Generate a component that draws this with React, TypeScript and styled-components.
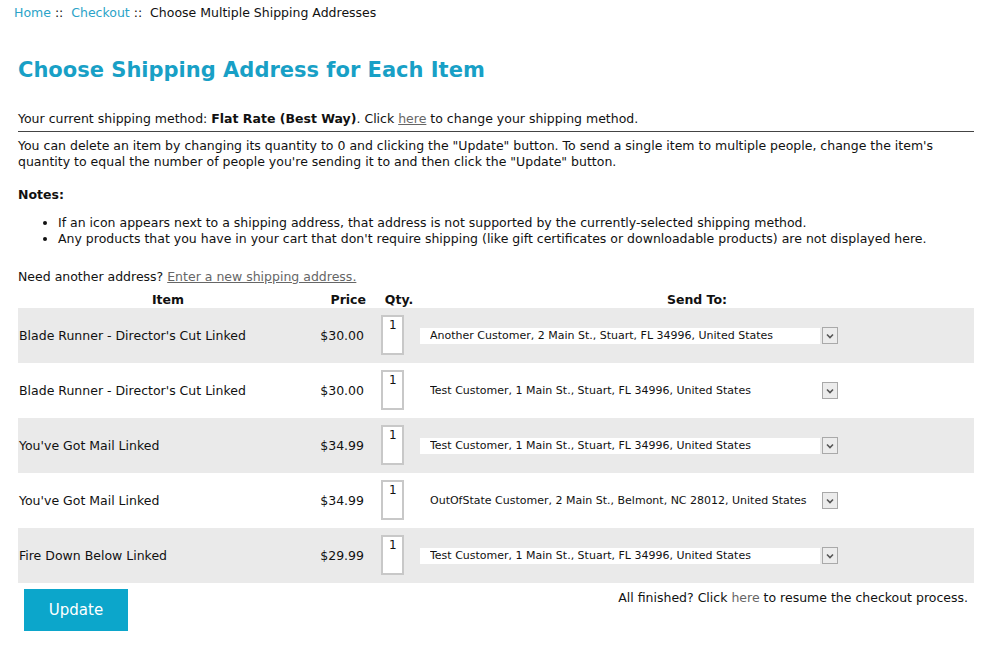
import React from "react";
import styled, { createGlobalStyle } from "styled-components";

const GlobalStyle = createGlobalStyle`
  html, body { margin: 0; padding: 0; background: #fff; }
  body {
    font-family: Verdana, "DejaVu Sans", sans-serif;
    font-size: 12.5px;
    line-height: 16px;
    color: #111;
  }
`;

const Page = styled.div`
  width: 984px;
  padding: 5px 10px 0 18px;
  box-sizing: border-box;
`;

const Breadcrumb = styled.div`
  margin-left: -4px;
  color: #111;
  white-space: pre;
`;

const CrumbLink = styled.a`
  color: #2aa3c8;
  text-decoration: none;
`;

const Title = styled.h1`
  margin: 35px 0 0;
  font-size: 21px;
  line-height: 28px;
  font-weight: bold;
  color: #18a0c6;
`;

const MethodLine = styled.p`
  margin: 27px 0 0;
  padding-bottom: 4px;
  border-bottom: 1px solid #444;
`;

const GrayLink = styled.a<{ $underline?: boolean }>`
  color: #666;
  text-decoration: ${(p) => (p.$underline ? "underline" : "none")};
`;

const Para = styled.p<{ $top: number }>`
  margin: ${(p) => p.$top}px 0 0;
`;

const NoteList = styled.ul`
  margin: 12px 0 0;
  padding-left: 40px;
`;

const Table = styled.div`
  margin-top: 6px;
  width: 956px;
`;

const Row = styled.div<{ $shade?: boolean; $head?: boolean }>`
  display: grid;
  grid-template-columns: 300px 54px 48px 1fr;
  align-items: center;
  height: ${(p) => (p.$head ? "17px" : "55px")};
  background: ${(p) => (p.$shade ? "#eaeaea" : "transparent")};
  font-weight: ${(p) => (p.$head ? "bold" : "normal")};
`;

const Cell = styled.div<{ $align?: "left" | "center" | "right"; $pad?: string }>`
  text-align: ${(p) => p.$align || "left"};
  padding: ${(p) => p.$pad || "0"};
  white-space: nowrap;
`;

const QtyInput = styled.input`
  box-sizing: border-box;
  width: 23px;
  height: 40px;
  margin-left: 9px;
  margin-top: -2px;
  padding: 0 0 20px 6px;
  border: 2px solid #c8c8c8;
  background: #fff;
  font-family: "DejaVu Sans", sans-serif;
  font-size: 12px;
  color: #111;
  outline: none;
`;

const SelectWrap = styled.div`
  display: flex;
  align-items: center;
  gap: 2px;
`;

const AddressSelect = styled.select`
  appearance: none;
  -webkit-appearance: none;
  width: 400px;
  height: 16px;
  border: none;
  border-radius: 0;
  background: #fff;
  padding: 0 0 0 10px;
  margin: 0;
  font-family: Verdana, "DejaVu Sans", sans-serif;
  font-size: 11px;
  line-height: 16px;
  color: #111;
  outline: none;
`;

const ArrowBox = styled.span`
  box-sizing: border-box;
  width: 16px;
  height: 17px;
  border: 1px solid #a9a9a9;
  background: #ececec;
  display: flex;
  align-items: center;
  justify-content: center;
`;

const Footer = styled.div`
  display: flex;
  justify-content: space-between;
  align-items: flex-start;
  padding: 6px 6px 0 6px;
  width: 956px;
  box-sizing: border-box;
`;

const UpdateButton = styled.button`
  width: 104px;
  height: 42px;
  border: none;
  background: #0ca6cb;
  color: #fff;
  font-family: Tahoma, "DejaVu Sans", sans-serif;
  font-size: 15px;
  cursor: pointer;
`;

const FinishText = styled.div`
  margin-top: 1px;
`;

const rows = [
  { item: "Blade Runner - Director's Cut Linked", price: "$30.00", addr: "Another Customer, 2 Main St., Stuart, FL 34996, United States" },
  { item: "Blade Runner - Director's Cut Linked", price: "$30.00", addr: "Test Customer, 1 Main St., Stuart, FL 34996, United States" },
  { item: "You've Got Mail Linked", price: "$34.99", addr: "Test Customer, 1 Main St., Stuart, FL 34996, United States" },
  { item: "You've Got Mail Linked", price: "$34.99", addr: "OutOfState Customer, 2 Main St., Belmont, NC 28012, United States" },
  { item: "Fire Down Below Linked", price: "$29.99", addr: "Test Customer, 1 Main St., Stuart, FL 34996, United States" },
];

const Chevron = () => (
  <svg width="8" height="6" viewBox="0 0 8 6">
    <path d="M1 1.5 L4 4.5 L7 1.5" fill="none" stroke="#555" strokeWidth="1.6" />
  </svg>
);

export default function App() {
  return (
    <>
      <GlobalStyle />
      <Page>
        <Breadcrumb>
          <CrumbLink href="#">Home</CrumbLink>{" ::  "}
          <CrumbLink href="#">Checkout</CrumbLink>{" ::  Choose Multiple Shipping Addresses"}
        </Breadcrumb>
        <Title>Choose Shipping Address for Each Item</Title>
        <MethodLine>
          Your current shipping method: <b>Flat Rate (Best Way)</b>. Click{" "}
          <GrayLink href="#" $underline>here</GrayLink> to change your shipping method.
        </MethodLine>
        <Para $top={6}>
          You can delete an item by changing its quantity to 0 and clicking the "Update" button. To send a single item to multiple people, change the item's
          <br />
          quantity to equal the number of people you're sending it to and then click the "Update" button.
        </Para>
        <Para $top={17}>
          <b>Notes:</b>
        </Para>
        <NoteList>
          <li>If an icon appears next to a shipping address, that address is not supported by the currently-selected shipping method.</li>
          <li>Any products that you have in your cart that don't require shipping (like gift certificates or downloadable products) are not displayed here.</li>
        </NoteList>
        <Para $top={22}>
          Need another address? <GrayLink href="#" $underline>Enter a new shipping address.</GrayLink>
        </Para>
        <Table>
          <Row $head>
            <Cell $align="center">Item</Cell>
            <Cell $align="right" $pad="0 6px 0 0">Price</Cell>
            <Cell $align="center" $pad="0 0 0 6px">Qty.</Cell>
            <Cell $align="center">Send To:</Cell>
          </Row>
          {rows.map((r, i) => (
            <Row key={i} $shade={i % 2 === 0}>
              <Cell $pad="0 0 0 1px">{r.item}</Cell>
              <Cell $align="right" $pad="0 8px 0 0">{r.price}</Cell>
              <Cell>
                <QtyInput defaultValue="1" />
              </Cell>
              <Cell>
                <SelectWrap>
                  <AddressSelect defaultValue={r.addr}>
                    <option>{r.addr}</option>
                  </AddressSelect>
                  <ArrowBox>
                    <Chevron />
                  </ArrowBox>
                </SelectWrap>
              </Cell>
            </Row>
          ))}
        </Table>
        <Footer>
          <UpdateButton>Update</UpdateButton>
          <FinishText>
            All finished? Click <GrayLink href="#">here</GrayLink> to resume the checkout process.
          </FinishText>
        </Footer>
      </Page>
    </>
  );
}
